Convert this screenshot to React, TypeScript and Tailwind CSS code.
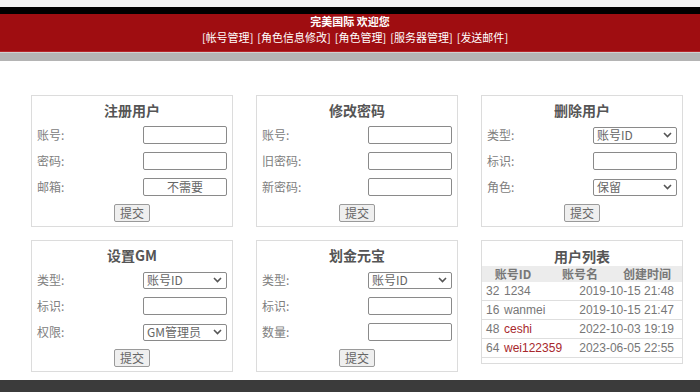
import { ReactNode } from "react"

const cjk = "font-['Microsoft_YaHei','Noto_Sans_CJK_SC',sans-serif]"

const navItems = ["帐号管理", "角色信息修改", "角色管理", "服务器管理", "发送邮件"]

const users = [
    { id: 32, name: "1234", time: "2019-10-15 21:48", red: false },
    { id: 16, name: "wanmei", time: "2019-10-15 21:47", red: false },
    { id: 48, name: "ceshi", time: "2022-10-03 19:19", red: true },
    { id: 64, name: "wei122359", time: "2023-06-05 22:55", red: true },
]

function Input({ value }: { value?: string }) {
    return (
        <div className="w-[84px] h-[18px] border border-[#8a8a8a] rounded-[2px] bg-white text-center text-[12px] leading-[16px] text-[#666]">
            {value}
        </div>
    )
}

function Select({ value }: { value: string }) {
    return (
        <div className="w-[84px] h-[17px] border border-[#8a8a8a] rounded-[2px] bg-white flex items-center justify-between pl-[3px] pr-[4px] text-[12px] text-[#666]">
            <span className="leading-none">{value}</span>
            <svg width="9" height="6" viewBox="0 0 9 6" fill="none" stroke="#555" strokeWidth="1.6">
                <path d="M1 1l3.5 3.5L8 1" />
            </svg>
        </div>
    )
}

function Row({ label, children }: { label: string; children: ReactNode }) {
    return (
        <div className="flex items-center justify-between">
            <span className="text-[12px] text-[#808080]">{label}</span>
            {children}
        </div>
    )
}

function Panel({ title, children }: { title: string; children: ReactNode }) {
    return (
        <div className="border border-[#dcdcdc] bg-white px-[5px] pt-[4px] pb-[4px]">
            <div className="text-center text-[14px] font-bold leading-[20px] text-[#555]">{title}</div>
            <div className="flex flex-col gap-[8px] mt-[6px]">{children}</div>
            <div className="flex justify-center mt-[8px]">
                <button className="h-[18px] px-[5px] border border-[#9a9a9a] rounded-[2px] bg-[#efefef] text-[12px] leading-none text-[#666]">提交</button>
            </div>
        </div>
    )
}

export default function App() {
    return (
        <div className={`w-[700px] h-[392px] overflow-hidden bg-white ${cjk}`}>
            <div className="h-[7px] bg-[#f2f2f2]" />
            <div className="h-[7px] bg-black" />
            <div className="h-[38px] bg-[#9f0d11] border-b border-[#b8262a] text-white text-[11px] text-center">
                <div className="font-bold leading-[15px]">完美国际 欢迎您</div>
                <div className="flex justify-center gap-[4px] leading-[16px] pl-[10px]">
                    {navItems.map((item) => (
                        <span key={item} className="whitespace-nowrap">[{item}]</span>
                    ))}
                </div>
            </div>
            <div className="h-[9px] bg-[#b4b4b4] border-t border-[#d0d0d0]" />

            <div className="grid grid-cols-[202px_202px_202px] gap-x-[23px] gap-y-[13px] items-start pl-[31px] pt-[34px]">
                <Panel title="注册用户">
                    <Row label="账号:"><Input /></Row>
                    <Row label="密码:"><Input /></Row>
                    <Row label="邮箱:"><Input value="不需要" /></Row>
                </Panel>
                <Panel title="修改密码">
                    <Row label="账号:"><Input /></Row>
                    <Row label="旧密码:"><Input /></Row>
                    <Row label="新密码:"><Input /></Row>
                </Panel>
                <Panel title="删除用户">
                    <Row label="类型:"><Select value="账号ID" /></Row>
                    <Row label="标识:"><Input /></Row>
                    <Row label="角色:"><Select value="保留" /></Row>
                </Panel>

                <Panel title="设置GM">
                    <Row label="类型:"><Select value="账号ID" /></Row>
                    <Row label="标识:"><Input /></Row>
                    <Row label="权限:"><Select value="GM管理员" /></Row>
                </Panel>
                <Panel title="划金元宝">
                    <Row label="类型:"><Select value="账号ID" /></Row>
                    <Row label="标识:"><Input /></Row>
                    <Row label="数量:"><Input /></Row>
                </Panel>
                <div className="border border-[#dcdcdc] bg-white pt-[5px]">
                    <div className="text-center text-[14px] font-bold leading-[20px] text-[#555]">用户列表</div>
                    <div className="grid grid-cols-[62px_72px_1fr] h-[16px] bg-[#ececec] text-[12px] leading-[16px] text-[#777] font-semibold text-center">
                        <span>账号ID</span>
                        <span>账号名</span>
                        <span className="pr-[4px]">创建时间</span>
                    </div>
                    {users.map((u) => (
                        <div key={u.id} className="flex items-center h-[19px] border-b border-[#dedede] pl-[4px] pr-[8px] font-['Liberation_Sans',sans-serif] text-[12px] text-[#777]">
                            <span className="w-[18px]">{u.id}</span>
                            <span className={u.red ? "text-[#a8282c]" : ""}>{u.name}</span>
                            <span className="ml-auto">{u.time}</span>
                        </div>
                    ))}
                    <div className="h-[5px]" />
                </div>
            </div>

            <div className="mt-[8px] h-[40px] bg-[#3b3b3b]" />
        </div>
    )
}
